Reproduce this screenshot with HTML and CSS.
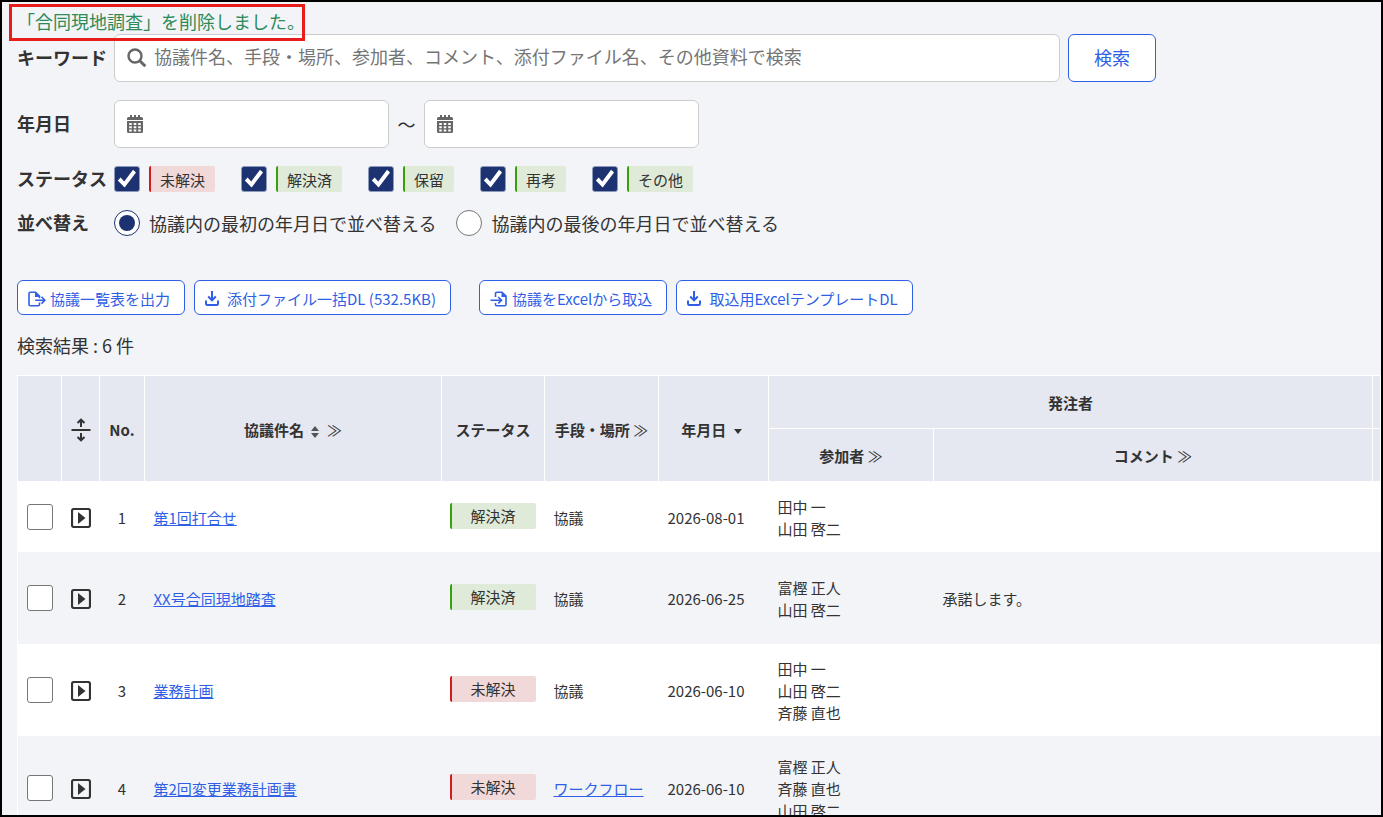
FILE: index.html
```html
<!DOCTYPE html>
<html lang="ja">
<head>
	<meta charset="UTF-8">
	<title>協議一覧</title>
	<link rel="stylesheet" href="styles.css">
</head>
<body>
	<svg class="sprite" aria-hidden="true">
		<symbol id="icoDownload" viewBox="0 0 14 15"><path d="M7 0v9M3.200 5.500L7 9.400 10.800 5.500M1 9.500v3.200q0 1.300 1.300 1.300h9.400q1.300 0 1.300-1.300V9.500" fill="none" stroke="currentColor" stroke-width="2"/></symbol>
		<symbol id="icoCalendar" viewBox="0 0 16 18"><path fill="currentColor" fill-rule="evenodd" d="M3 0h2v2h2V0h2v2h2V0h2v2h1.500q1.500 0 1.500 1.500V5H0V3.500Q0 2 1.500 2H3zM0 6h16v10.500q0 1.500-1.500 1.500h-13Q0 18 0 16.500zM2.200 8v2h2.600V8zM6.700 8v2h2.600V8zM11.200 8v2h2.600V8zM2.200 11.200v2h2.600v-2zM6.700 11.200v2h2.600v-2zM11.200 11.200v2h2.600v-2zM2.200 14.400v2h2.600v-2zM6.700 14.400v2h2.600v-2zM11.200 14.400v2h2.600v-2z"/></symbol>
		<symbol id="icoToggle" viewBox="0 0 20 20"><rect x="1" y="1" width="18" height="18" rx="2" fill="none" stroke="currentColor" stroke-width="2.200"/><path d="M7 4v12l7.500-6z" fill="currentColor"/></symbol>
	</svg>
	<p class="message" role="status">「合同現地調査」を削除しました。</p>
	<form class="search">
		<label class="caption" for="txtKeyword">キーワード</label>
		<div class="field-row">
			<div class="textbox keyword">
				<svg class="ico-search" viewBox="0 0 20 20"><circle cx="8" cy="8" r="6.500" fill="none" stroke="currentColor" stroke-width="2.400"/><path d="M12.500 12.500l5.800 5.800" stroke="currentColor" stroke-width="3"/></svg>
				<input type="text" id="txtKeyword" placeholder="協議件名、手段・場所、参加者、コメント、添付ファイル名、その他資料で検索">
			</div>
			<button type="button" class="btn btn-search">検索</button>
		</div>

		<label class="caption" for="txtDateFrom">年月日</label>
		<div class="field-row">
			<div class="textbox date">
				<svg class="ico-calendar"><use href="#icoCalendar"/></svg>
				<input type="text" id="txtDateFrom">
			</div>
			<span class="tilde">～</span>
			<div class="textbox date">
				<svg class="ico-calendar"><use href="#icoCalendar"/></svg>
				<input type="text" id="txtDateTo" aria-label="年月日（終了）">
			</div>
		</div>

		<span class="caption">ステータス</span>
		<div class="choices">
			<label class="choice"><input type="checkbox" checked><span class="badge unsolved">未解決</span></label>
			<label class="choice"><input type="checkbox" checked><span class="badge">解決済</span></label>
			<label class="choice"><input type="checkbox" checked><span class="badge">保留</span></label>
			<label class="choice"><input type="checkbox" checked><span class="badge">再考</span></label>
			<label class="choice"><input type="checkbox" checked><span class="badge">その他</span></label>
		</div>

		<span class="caption">並べ替え</span>
		<div class="choices sort">
			<label class="choice"><input type="radio" name="sort" checked><span>協議内の最初の年月日で並べ替える</span></label>
			<label class="choice"><input type="radio" name="sort"><span>協議内の最後の年月日で並べ替える</span></label>
		</div>
	</form>

	<div class="toolbar">
		<div class="group">
			<button type="button" class="btn">
				<svg class="ico-file" viewBox="0 0 18 16"><path d="M11.500 11.500v2q0 1.300-1.300 1.300H2.300Q1 14.800 1 13.500v-11Q1 1.200 2.300 1.200h5.200l4 4v2M7.200 9.200h9.300M13.500 5.800l3.300 3.400-3.300 3.400" fill="none" stroke="currentColor" stroke-width="1.600"/><path d="M7 1v5h5z" fill="currentColor"/></svg>
				協議一覧表を出力
			</button>
			<button type="button" class="btn wide">
				<svg class="ico-download"><use href="#icoDownload"/></svg>
				添付ファイル一括DL (532.5KB)
			</button>
		</div>
		<div class="group">
			<button type="button" class="btn">
				<svg class="ico-file" viewBox="0 0 18 16"><path d="M5.500 6V2.500q0-1.300 1.300-1.300h5.200l4 4v8.300q0 1.300-1.300 1.300H6.800q-1.300 0-1.300-1.300V12M0.500 9.200h10.500M8.200 6l3.300 3.200-3.300 3.200" fill="none" stroke="currentColor" stroke-width="1.600"/><path d="M11.500 1v5h5z" fill="currentColor"/></svg>
				協議をExcelから取込
			</button>
			<button type="button" class="btn wide">
				<svg class="ico-download"><use href="#icoDownload"/></svg>
				取込用ExcelテンプレートDL
			</button>
		</div>
	</div>

	<p class="result">検索結果 : 6 件</p>

	<table class="list">
		<colgroup>
			<col class="col-check"><col class="col-open"><col class="col-no"><col class="col-name"><col class="col-status"><col class="col-place"><col class="col-date"><col class="col-member"><col><col class="col-next">
		</colgroup>
		<thead>
			<tr>
				<th rowspan="2"></th>
				<th rowspan="2"><svg class="ico-expand" viewBox="0 0 20 24"><path d="M0.500 12h19M10 9V2M6.500 5L10 1.700 13.500 5M10 15v7M6.500 19l3.500 3.300 3.500-3.300" fill="none" stroke="currentColor" stroke-width="2"/></svg></th>
				<th rowspan="2">No.</th>
				<th rowspan="2">協議件名 <svg class="ico-sort both" viewBox="0 0 8 12"><path d="M4 0l4 5H0zM0 7h8l-4 5z" fill="currentColor"/></svg> <span class="more">≫</span></th>
				<th rowspan="2">ステータス</th>
				<th rowspan="2">手段・場所 <span class="more">≫</span></th>
				<th rowspan="2">年月日 <svg class="ico-sort" viewBox="0 0 8 12"><path d="M0 3h8l-4 5z" fill="currentColor"/></svg></th>
				<th colspan="2">発注者</th>
				<th></th>
			</tr>
			<tr>
				<th>参加者 <span class="more">≫</span></th>
				<th>コメント <span class="more">≫</span></th>
				<th></th>
			</tr>
		</thead>
		<tbody>
			<tr class="short">
				<td class="center"><input type="checkbox" aria-label="1を選択"></td>
				<td class="center"><button type="button" class="toggle" aria-label="開く"><svg><use href="#icoToggle"/></svg></button></td>
				<td class="center">1</td>
				<td><a href="#">第1回打合せ</a></td>
				<td class="status"><span class="badge">解決済</span></td>
				<td>協議</td>
				<td>2026-08-01</td>
				<td>田中 一<br>山田 啓二</td>
				<td></td>
				<td></td>
			</tr>
			<tr>
				<td class="center"><input type="checkbox" aria-label="2を選択"></td>
				<td class="center"><button type="button" class="toggle" aria-label="開く"><svg><use href="#icoToggle"/></svg></button></td>
				<td class="center">2</td>
				<td><a href="#">XX号合同現地踏査</a></td>
				<td class="status"><span class="badge">解決済</span></td>
				<td>協議</td>
				<td>2026-06-25</td>
				<td>富樫 正人<br>山田 啓二</td>
				<td>承諾します。</td>
				<td></td>
			</tr>
			<tr>
				<td class="center"><input type="checkbox" aria-label="3を選択"></td>
				<td class="center"><button type="button" class="toggle" aria-label="開く"><svg><use href="#icoToggle"/></svg></button></td>
				<td class="center">3</td>
				<td><a href="#">業務計画</a></td>
				<td class="status"><span class="badge unsolved">未解決</span></td>
				<td>協議</td>
				<td>2026-06-10</td>
				<td>田中 一<br>山田 啓二<br>斉藤 直也</td>
				<td></td>
				<td></td>
			</tr>
			<tr class="tall">
				<td class="center"><input type="checkbox" aria-label="4を選択"></td>
				<td class="center"><button type="button" class="toggle" aria-label="開く"><svg><use href="#icoToggle"/></svg></button></td>
				<td class="center">4</td>
				<td><a href="#">第2回変更業務計画書</a></td>
				<td class="status"><span class="badge unsolved">未解決</span></td>
				<td><a href="#">ワークフロー</a></td>
				<td>2026-06-10</td>
				<td>富樫 正人<br>斉藤 直也<br>山田 啓二</td>
				<td></td>
				<td></td>
			</tr>
		</tbody>
	</table>
</body>
</html>
```

FILE: styles.css
```css
*, *::before, *::after{
	box-sizing: border-box;
}
body{
	position: relative;
	height: 100vh;
	margin: 0px;
	padding: 7px 0px 0px 15px;
	overflow: hidden;
	border: 2px solid #000;
	background-color: #f2f4f8;
	color: #333;
	font: 18px/24px "Noto Sans CJK JP", "Noto Sans", sans-serif;
}
p{
	margin: 0px;
}
svg{
	flex: none;
}
button, input{
	font: inherit;
	color: inherit;
}
a{
	color: #2f5fe6;
}
.sprite{
	display: none;
}
.message{
	margin-bottom: 1px;
	color: #2e8b57;
}
/* red frame round the message, over the form below it */
.message::after{
	content: "";
	position: absolute;
	left: 7px;
	top: 2px;
	width: 296px;
	height: 37px;
	border: 3px solid #e91c1c;
}

/* search form */
.search{
	display: grid;
	grid-template-columns: 97px 1fr;
	row-gap: 18px;
	align-items: center;
}
.caption{
	padding-bottom: 2px;
	font-weight: bold;
	white-space: nowrap;
}
.field-row{
	display: flex;
	align-items: center;
	gap: 8px;
}
.tilde{
	width: 19px;
	text-align: center;
}
.textbox{
	display: flex;
	align-items: center;
	gap: 7px;
	height: 48px;
	padding: 0px 12px;
	border: 1px solid #ccc;
	border-radius: 6px;
	background-color: #fff;
	color: #666;
}
.textbox input{
	flex: 1;
	min-width: 0px;
	padding: 0px 0px 4px;
	border: 0px;
	outline: none;
	background: none;
}
.textbox input::placeholder{
	color: #757575;
	opacity: 1;
}
.keyword{
	flex: 1;
	max-width: 946px;
}
.date{
	width: 275px;
}
.ico-search{
	width: 20px;
	height: 20px;
}
.ico-calendar{
	width: 16px;
	height: 18px;
}
.btn{
	display: flex;
	align-items: center;
	justify-content: center;
	gap: 4px;
	height: 35px;
	padding: 2px 14px 0px 10px;
	border: 1px solid #2f5fe6;
	border-radius: 6px;
	background-color: #fff;
	color: #2f5fe6;
	font-size: 15px;
	white-space: nowrap;
}
.btn.wide{
	gap: 8px;
}
.btn-search{
	width: 88px;
	height: 48px;
	padding: 0px 0px 2px;
	font-size: 18px;
}
.choices{
	display: flex;
	gap: 26px;
}
.choices.sort{
	gap: 20px;
}
.choice{
	display: flex;
	align-items: center;
	gap: 9px;
	height: 26px;
}
input[type=checkbox], input[type=radio]{
	appearance: none;
	display: grid;
	place-items: center;
	flex: none;
	width: 26px;
	height: 26px;
	margin: 0px;
	border: 1px solid #767676;
	border-radius: 3px;
	background-color: #fff;
}
input[type=radio]{
	border-radius: 50%;
}
input[type=checkbox]:checked{
	border-color: #8d9aba;
	background-color: #1d3270;
}
input[type=checkbox]:checked::before{
	content: "";
	width: 20px;
	height: 20px;
	background-color: #fff;
	clip-path: polygon(4% 57%, 18% 43%, 36% 62%, 80% 4%, 95% 18%, 38% 92%);
}
input[type=radio]:checked{
	border-color: #1d3270;
}
input[type=radio]:checked::before{
	content: "";
	width: 16px;
	height: 16px;
	border-radius: 50%;
	background-color: #1d3270;
}
.badge{
	height: 26px;
	padding: 2px 10px 0px 9px;
	border-left: 2px solid #38a10a;
	border-radius: 2px;
	background-color: #dfead8;
	font-size: 15px;
}
.badge.unsolved{
	border-left-color: #d01c1c;
	background-color: #f2d9d9;
}

/* output buttons */
.toolbar{
	display: flex;
	gap: 28px;
	margin-top: 44px;
}
.group{
	display: flex;
	gap: 9px;
}
.ico-file{
	width: 18px;
	height: 16px;
}
.ico-download{
	width: 14px;
	height: 15px;
}
.result{
	margin: 18px 0px;
}

/* list */
.list{
	width: 100%;
	table-layout: fixed;
	border-collapse: collapse;
	border-left: 1px solid #fff;
	font-size: 15px;
	line-height: 22px;
}
.list th{
	height: 53px;
	padding: 2px 0px 0px;
	border: 1px solid #fff;
	background-color: #e5e8f1;
	white-space: nowrap;
}
.list td{
	height: 92px;
	padding: 3px 0px 0px 9px;
}
.list .short td{
	height: 70px;
}
.list .tall td{
	height: 104px;
}
.list .center{
	padding-left: 0px;
	text-align: center;
}
.list .status{
	padding: 0px 0px 1px 8px;
}
.list tbody tr:nth-child(odd){
	background-color: #fff;
}
.list td input{
	margin: -3px auto 0px;
}
.status .badge{
	display: block;
	width: 86px;
	text-align: center;
}
.more{
	font-weight: normal;
}
.toggle{
	display: block;
	margin: 0px auto;
	padding: 0px;
	border: 0px;
	background: none;
}
.toggle svg{
	display: block;
	width: 20px;
	height: 20px;
}
.ico-expand{
	display: block;
	width: 20px;
	height: 24px;
	margin: 0px auto;
}
.ico-sort{
	width: 8px;
	height: 12px;
	margin: 0px 4px;
	vertical-align: -2px;
}
.ico-sort.both{
	color: #555;
}
.col-check{
	width: 44px;
}
.col-open{
	width: 38px;
}
.col-no{
	width: 45px;
}
.col-name{
	width: 297px;
}
.col-status{
	width: 103px;
}
.col-place{
	width: 114px;
}
.col-date{
	width: 110px;
}
.col-member{
	width: 165px;
}
.col-next{
	width: 8px;
}
```
